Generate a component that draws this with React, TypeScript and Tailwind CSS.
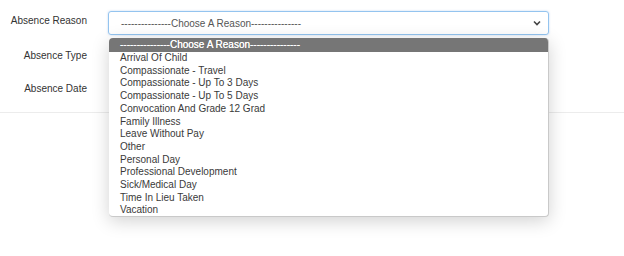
import React from "react";

const dashes = "---------------";
const items = [
  "Arrival Of Child",
  "Compassionate - Travel",
  "Compassionate - Up To 3 Days",
  "Compassionate - Up To 5 Days",
  "Convocation And Grade 12 Grad",
  "Family Illness",
  "Leave Without Pay",
  "Other",
  "Personal Day",
  "Professional Development",
  "Sick/Medical Day",
  "Time In Lieu Taken",
  "Vacation",
];

export default function App() {
  return (
    <div className="relative w-[624px] h-[256px] bg-white overflow-hidden font-['Liberation_Sans',Arial,sans-serif] text-[10px] text-[#333]">
      <div className="pt-[11px]">
        <div className="flex items-start">
          <div className="w-[87px] text-right leading-[12px] mt-[4px]">Absence Reason</div>
          <div className="ml-[21px] w-[441px] h-[24px] rounded-[3px] border border-[#94c4ef] shadow-[0_0_2px_rgba(120,170,230,0.5)] flex items-center pl-[12px] pr-[6px] text-[#555]">
            <span className="flex-1 whitespace-pre">{dashes}Choose A Reason{dashes}</span>
            <svg width="8" height="6" viewBox="0 0 8 6" className="mr-[1px]">
              <path d="M1 1.5 L4 4.5 L7 1.5" fill="none" stroke="#444" strokeWidth="1.6" />
            </svg>
          </div>
        </div>
        <div className="w-[87px] text-right leading-[12px] mt-[15px]">Absence Type</div>
        <div className="w-[87px] text-right leading-[12px] mt-[21px]">Absence Date</div>
        <div className="mt-[17px] border-t border-[#ececec]" />
      </div>

      <div className="absolute left-[109px] top-[38px] w-[440px] h-[179px] bg-white rounded-[4px] border-r border-b border-[#c9c9c9] shadow-[0_4px_18px_rgba(0,0,0,0.18)] overflow-hidden">
        <div className="h-[14px] bg-[#767676] text-white pl-[11px] leading-[14px] whitespace-pre [text-shadow:0_0_0.4px_#fff]">
          {dashes}Choose A Reason{dashes}
        </div>
        {items.map((it) => (
          <div key={it} className="pl-[11px] leading-[12.7px] text-[#3a3a3a] whitespace-pre">
            {it}
          </div>
        ))}
      </div>
    </div>
  );
}
